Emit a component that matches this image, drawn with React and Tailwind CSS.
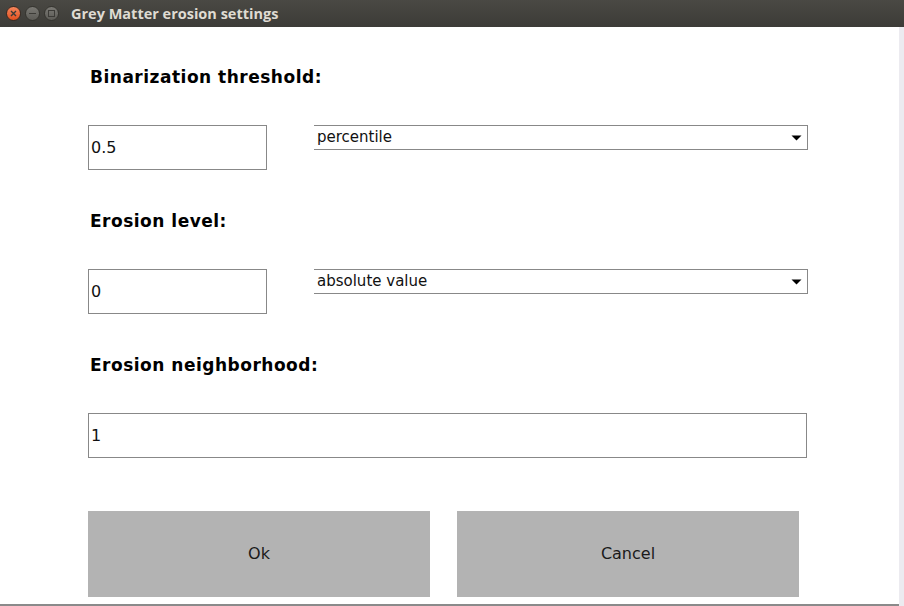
import React from 'react';

const dejavu = { fontFamily: '"DejaVu Sans", Verdana, sans-serif' };

const Caret = () => (
  <svg width="11" height="6" viewBox="0 0 11 6" className="mr-[5px]">
    <path d="M0.5 0.5 L10.5 0.5 L5.5 5.5 Z" fill="#000" />
  </svg>
);

const TextBox = ({ value, wide }) => (
  <div
    className={`h-[45px] border border-[#888] bg-white flex items-center pl-[2px] text-[16px] text-[#111] ${wide ? 'w-[719px]' : 'w-[179px]'}`}
  >
    {value}
  </div>
);

const Select = ({ value }) => (
  <div className="ml-[47px] w-[494px] h-[25px] border-t border-b border-r border-[#888] bg-white flex items-center justify-between pl-[3px] text-[15px] text-[#111]">
    <span>{value}</span>
    <Caret />
  </div>
);

const Section = ({ label, children, first }) => (
  <div className={first ? '' : 'mt-[41px]'}>
    <div className="h-[20px] leading-[20px] pl-[2px] text-[17px] font-bold tracking-[0.5px] text-black">{label}</div>
    <div className="mt-[38px] flex items-start">{children}</div>
  </div>
);

export default function App() {
  return (
    <div className="w-[904px] h-[606px] overflow-hidden flex flex-col bg-white" style={dejavu}>
      {/* title bar */}
      <div className="h-[27px] shrink-0 flex items-center bg-gradient-to-b from-[#4a4944] to-[#3c3b37]">
        <div className="flex items-center gap-[4px] pl-[6px]">
          <div className="w-[15px] h-[15px] rounded-full bg-gradient-to-b from-[#f5855a] to-[#e3501c] border border-[#3a2a22] flex items-center justify-center">
            <svg width="7" height="7" viewBox="0 0 7 7">
              <path d="M1 1 L6 6 M6 1 L1 6" stroke="#3c3b37" strokeWidth="1.4" />
            </svg>
          </div>
          <div className="w-[15px] h-[15px] rounded-full bg-gradient-to-b from-[#7a7974] to-[#5c5b56] border border-[#35342f] flex items-center justify-center">
            <div className="w-[7px] h-[1.5px] bg-[#3c3b37]" />
          </div>
          <div className="w-[15px] h-[15px] rounded-full bg-gradient-to-b from-[#7a7974] to-[#5c5b56] border border-[#35342f] flex items-center justify-center">
            <div className="w-[7px] h-[7px] border border-[#3c3b37]" />
          </div>
        </div>
        <span
          className="ml-[12px] text-[14.5px] font-bold text-[#dfdbd2]"
          style={{ fontFamily: '"Open Sans", "Liberation Sans", sans-serif' }}
        >
          Grey Matter erosion settings
        </span>
      </div>

      <div className="flex-1 flex">
        <div className="flex-1 flex flex-col">
          <div className="flex-1 pl-[88px] pt-[40px]">
            <Section label="Binarization threshold:" first>
              <TextBox value="0.5" />
              <Select value="percentile" />
            </Section>
            <Section label="Erosion level:">
              <TextBox value="0" />
              <Select value="absolute value" />
            </Section>
            <Section label="Erosion neighborhood:">
              <TextBox value="1" wide />
            </Section>
            <div className="mt-[53px] flex gap-[27px]">
              <button className="w-[342px] h-[86px] bg-[#b3b3b3] text-[16px] text-[#1a1a1a]">Ok</button>
              <button className="w-[342px] h-[86px] bg-[#b3b3b3] text-[16px] text-[#1a1a1a]">Cancel</button>
            </div>
          </div>
          <div className="h-[2px] bg-[#8a8a8a]" />
        </div>
        <div className="w-[5px] bg-[#ecebf0]" />
      </div>
    </div>
  );
}
